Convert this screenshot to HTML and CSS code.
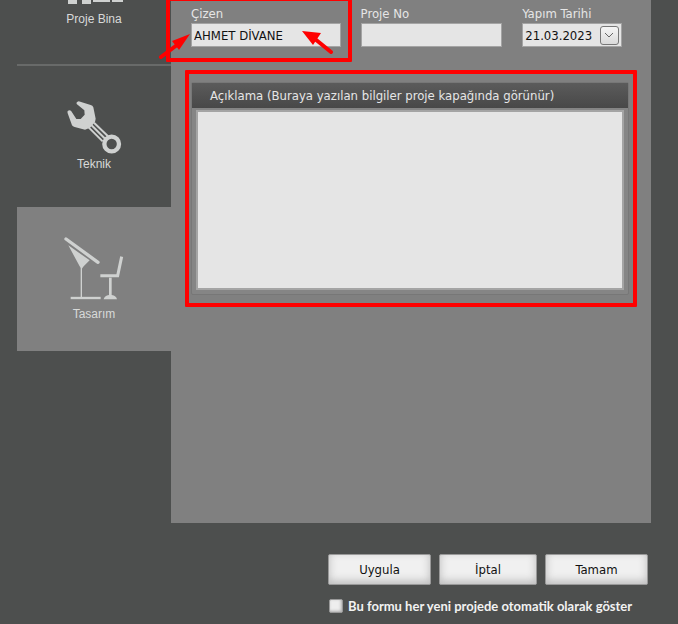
FILE: index.html
```html
<!DOCTYPE html>
<html lang="tr">
<head>
<meta charset="utf-8">
<title>Proje Bilgileri</title>
<link rel="stylesheet" href="styles.css">
</head>
<body>
<div class="window">
  <nav class="sidebar">
    <a class="tab tab-building" href="#bina">
      <svg class="icon-building" width="58" height="6" viewBox="0 0 58 6" aria-hidden="true">
        <path d="M3 0h9v4h-9zM17 0h9v4h-9zM28 0h17v2h-17zM47 0h11v2h-11z"/>
      </svg>
      <span>Proje Bina</span>
    </a>
    <a class="tab tab-technical" href="#teknik">
      <svg width="56" height="56" viewBox="48 30 168 168" aria-hidden="true">
        <path d="M54 62Q51 64 53 70L66 106Q68 110 74 111L105 119L120 113L135 96L137 86L130 52Q128 46 122 45L86 34Q78 36 80 42L103 61L104 74L92 87H79L64 64Q60 58 54 62Z"/>
        <path class="line" stroke-width="6" d="M132 98L174 139M124 105L166 147M116 112L158 154"/>
        <circle class="line" stroke-width="13" cx="185" cy="162" r="22"/>
      </svg>
      <span>Teknik</span>
    </a>
    <a class="tab tab-design" href="#tasarim" aria-current="page">
      <svg width="60" height="64" viewBox="45 33 180 192" aria-hidden="true">
        <path class="line round" stroke-width="10" d="M51 42L147 112"/>
        <path d="M58 61L122 106L104 124L98 132L92 124Z"/>
        <path class="line" stroke-width="4" d="M97 125V218"/>
        <path class="line" stroke-width="7" d="M65 219H155"/>
        <path class="line" stroke-width="9" d="M154 152H206L218 95"/>
        <path class="line" stroke-width="8" d="M184 158V214"/>
        <path d="M164 223Q166 212 180 210H188Q202 212 204 223Z"/>
      </svg>
      <span>Tasarım</span>
    </a>
  </nav>

  <main class="content">
    <div class="fields">
      <div class="field">
        <label for="drawer">Çizen</label>
        <input id="drawer" type="text" value="AHMET DİVANE">
        <div class="mark mark-field"></div>
        <svg class="arrows" width="180" height="36" viewBox="156 26 180 36" aria-hidden="true">
          <path d="M190 34L172 41L179 50ZM302 31L321 33L313 45Z"/>
          <path class="shaft" d="M161 57L177 45M331 52L315 39"/>
        </svg>
      </div>
      <div class="field">
        <label for="number">Proje No</label>
        <input id="number" type="text">
      </div>
      <div class="field">
        <label for="date">Yapım Tarihi</label>
        <div class="date-box">
          <input id="date" type="text" value="21.03.2023">
          <button class="drop" type="button" aria-label="Takvim">
            <svg width="10" height="6" viewBox="0 0 10 6" aria-hidden="true"><path d="M1 1L5 5L9 1"/></svg>
          </button>
        </div>
      </div>
    </div>

    <section class="panel">
      <label class="panel-title" for="note">Açıklama (Buraya yazılan bilgiler proje kapağında görünür)</label>
      <textarea id="note"></textarea>
      <div class="mark mark-panel"></div>
    </section>
  </main>

  <footer class="footer">
    <div class="actions">
      <button class="action" type="button">Uygula</button>
      <button class="action" type="button">İptal</button>
      <button class="action" type="button">Tamam</button>
    </div>
    <label class="auto-show"><input type="checkbox">Bu formu her yeni projede otomatik olarak göster</label>
  </footer>
</div>
</body>
</html>
```
FILE: styles.css
```css
* {
  box-sizing: border-box;
}

body {
  margin: 0;
  background: #4d4f4e;
  color: #e6e6e6;
  font: 13px/16px "DejaVu Sans Condensed", "DejaVu Sans", sans-serif;
}

.window {
  display: grid;
  grid-template-columns: 154px 1fr;
  grid-template-rows: auto 1fr;
  min-height: 100vh;
  padding: 0 27px 0 17px;
  overflow: hidden;
}

/* Sidebar */
.sidebar {
  display: flex;
  flex-direction: column;
}

.tab {
  display: flex;
  flex-direction: column;
  align-items: center;
  color: #d8dad9;
  font: 12px/16px "Liberation Sans", sans-serif;
  text-decoration: none;
}

.tab svg {
  fill: #cfd1d0;
}

.tab .line {
  fill: none;
  stroke: #cfd1d0;
}

.tab .round {
  stroke-linecap: round;
}

.tab-building {
  gap: 5px;
  height: 66px;
  border-bottom: 2px solid #686a69;
}

.tab-technical {
  height: 141px;
  padding-top: 34px;
}

.tab-design {
  gap: 6px;
  height: 144px;
  padding-top: 29px;
  background: #808080;
}

/* Form area */
.content {
  min-height: 523px;
  padding: 6px 22px 0 20px;
  background: #808080;
}

.fields {
  display: grid;
  grid-template-columns: 150fr 142fr 100fr;
  gap: 20px;
  padding-right: 7px;
}

.field {
  position: relative;
}

.field label {
  display: block;
  margin-bottom: 1px;
}

.field input {
  display: block;
  width: 100%;
  height: 24px;
  padding: 0 2px;
  border: 1px solid #a4a4a4;
  border-radius: 0;
  background: #e5e5e5;
  color: #111;
  font: inherit;
}

.date-box {
  display: flex;
  align-items: center;
  height: 24px;
  padding-right: 2px;
  border: 1px solid #a4a4a4;
  background: #e5e5e5;
}

.date-box input {
  flex: 1;
  min-width: 0;
  height: 22px;
  border: 0;
}

.drop {
  display: grid;
  place-items: center;
  width: 19px;
  height: 19px;
  padding: 0;
  border: 1px solid #777;
  border-radius: 3px;
  background: linear-gradient(#f5f5f5, #dadada);
}

.drop path {
  fill: none;
  stroke: #666;
  stroke-width: 1;
}

.panel {
  position: relative;
  margin-top: 35px;
  padding-bottom: 4px;
  border: 1px solid #777;
  border-radius: 2px;
  background: #858585;
}

.panel-title {
  display: block;
  padding: 5px 18px 4px;
  background: linear-gradient(#5b5b5b, #484848);
}

.panel textarea {
  display: block;
  width: calc(100% - 8px);
  height: 180px;
  margin: 2px 4px 0;
  border: 2px solid #a4a4a4;
  border-radius: 0;
  background: #e5e5e5;
  color: #111;
  font: inherit;
  resize: none;
}

/* Red call-outs */
.mark {
  position: absolute;
  border: 4px solid #f00;
  border-radius: 1px;
  pointer-events: none;
}

.mark-field {
  inset: -9px -11px -15px -25px;
}

.mark-panel {
  inset: -13px -9px -13px -7px;
}

.arrows {
  position: absolute;
  top: 20px;
  left: -35px;
  fill: #f00;
  pointer-events: none;
}

.arrows .shaft {
  stroke: #f00;
  stroke-width: 4;
  stroke-linecap: round;
}

/* Footer */
.footer {
  grid-column: 2;
  justify-self: end;
  width: 323px;
  padding: 31px 3px 0 0;
}

.actions {
  display: grid;
  grid-template-columns: 103fr 98fr 103fr;
  gap: 8px;
}

.action {
  height: 31px;
  padding: 0;
  border: 1px solid #999;
  border-radius: 2px;
  background: #f0f0f0;
  box-shadow: inset 0 -3px 8px #bbb;
  color: #111;
  font: inherit;
}

.auto-show {
  display: flex;
  align-items: center;
  gap: 5px;
  margin-top: 13px;
  padding-left: 1px;
  color: #f2f2f2;
  font: bold 13px/16px Lato, sans-serif;
  white-space: nowrap;
}

.auto-show input {
  width: 14px;
  height: 14px;
  margin: 0;
  border: 1px solid #999;
  border-radius: 2px;
  background: #eee;
  box-shadow: inset -1px -1px 3px #aaa;
  appearance: none;
}
```
